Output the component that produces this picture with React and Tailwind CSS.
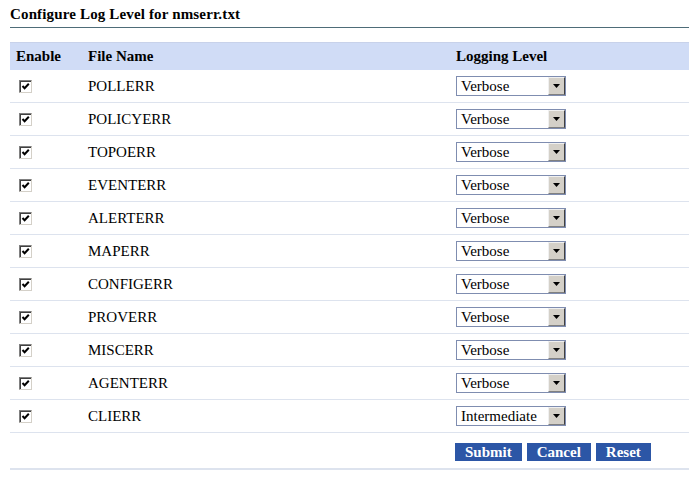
const files = [
  ['POLLERR', 'Verbose'],
  ['POLICYERR', 'Verbose'],
  ['TOPOERR', 'Verbose'],
  ['EVENTERR', 'Verbose'],
  ['ALERTERR', 'Verbose'],
  ['MAPERR', 'Verbose'],
  ['CONFIGERR', 'Verbose'],
  ['PROVERR', 'Verbose'],
  ['MISCERR', 'Verbose'],
  ['AGENTERR', 'Verbose'],
  ['CLIERR', 'Intermediate'],
]

function Check() {
  return (
    <span className="w-[13px] h-[13px] flex items-center justify-center bg-white border-t border-l border-t-[#808080] border-l-[#808080] border-b border-r border-b-[#d4d0c8] border-r-[#d4d0c8] shadow-[inset_1px_1px_0_#404040]">
      <svg width="9" height="9" viewBox="0 0 9 9">
        <path d="M1.5 4 L3.6 6.2 L7.8 1.8" fill="none" stroke="#000" strokeWidth="2" />
      </svg>
    </span>
  )
}

function Select({ value }) {
  return (
    <div className="w-[110px] h-[20px] flex border border-[#7f8db0] bg-white">
      <span className="flex-1 pl-[4px] text-[15px] leading-[18px] text-black">{value}</span>
      <span className="w-[17px] h-[18px] flex items-center justify-center bg-[#d4d0c8] border-t border-l border-t-[#f0f0f0] border-l-[#f0f0f0] border-b border-r border-b-[#808080] border-r-[#404040]">
        <svg width="7" height="4" viewBox="0 0 7 4">
          <path d="M0 0 H7 L3.5 4 Z" fill="#000" />
        </svg>
      </span>
    </div>
  )
}

export default function App() {
  return (
    <div className="min-h-screen bg-white pl-[10px] font-['Liberation_Serif','Times_New_Roman',serif] text-black">
      <div className="pt-[6px] pb-[4px] border-b border-[#4e6c78]">
        <h1 className="text-[15px] leading-[17px] font-bold tracking-[0.15px]">Configure Log Level for nmserr.txt</h1>
      </div>

      <div className="mt-[14px]">
        <div className="grid grid-cols-[72px_368px_1fr] h-[28px] items-center bg-[#d0dcf6] border-t border-[#c8d2ea] text-[15px] font-bold">
          <span className="pl-[6px]">Enable</span>
          <span className="pl-[6px]">File Name</span>
          <span className="pl-[6px]">Logging Level</span>
        </div>

        {files.map(([name, level]) => (
          <div
            key={name}
            className="grid grid-cols-[72px_368px_1fr] h-[33px] items-center border-b border-[#dde3ee] text-[15px]"
          >
            <span className="pl-[9px] pt-[1px]">
              <Check />
            </span>
            <span className="pl-[6px]">{name}</span>
            <span className="pl-[6px]">
              <Select value={level} />
            </span>
          </div>
        ))}

        <div className="grid grid-cols-[72px_368px_1fr] h-[37px] items-center border-b-2 border-[#dde3ee]">
          <span />
          <span />
          <div className="pl-[5px] flex gap-[5px] pt-[2px]">
            {['Submit', 'Cancel', 'Reset'].map((b) => (
              <button
                key={b}
                className="h-[18px] px-[10px] bg-[#2c56a6] text-white text-[15px] leading-[18px] font-bold"
              >
                {b}
              </button>
            ))}
          </div>
        </div>
      </div>
    </div>
  )
}
